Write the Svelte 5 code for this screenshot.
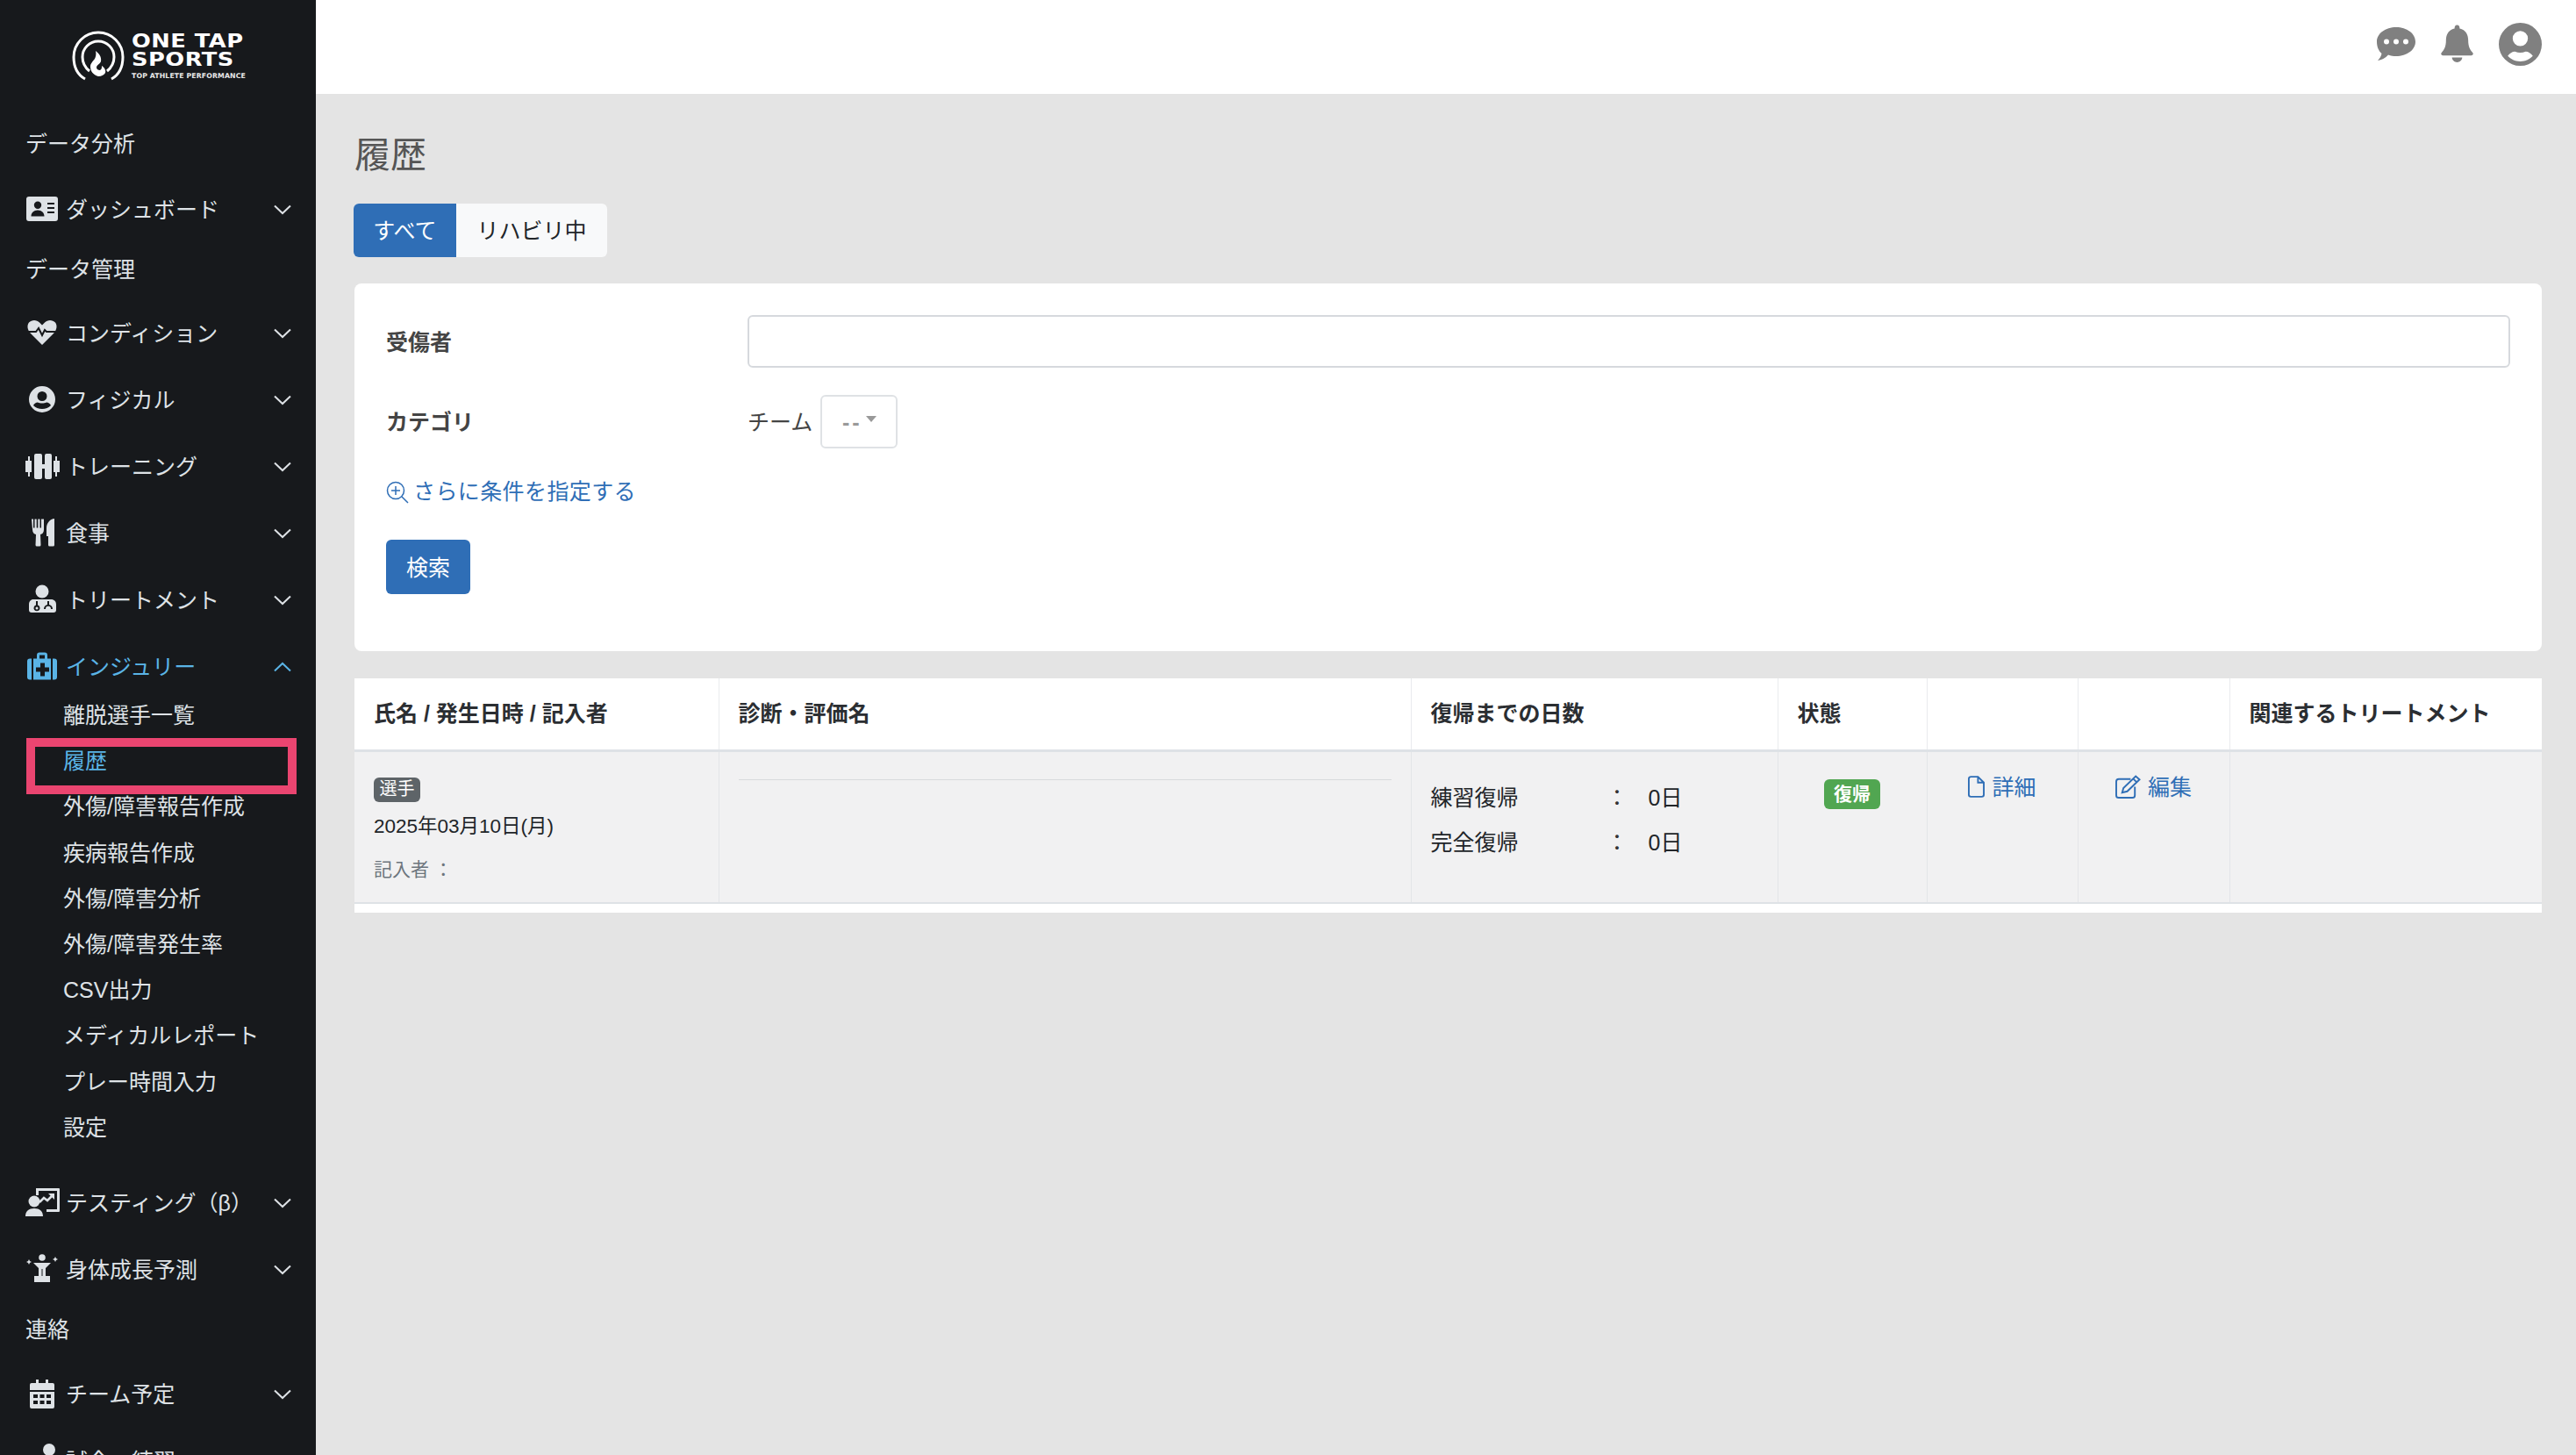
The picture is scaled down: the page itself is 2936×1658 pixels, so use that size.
<script>
  const topItems = [
    { type: "head", label: "データ分析" },
    { type: "group", label: "ダッシュボード", icon: "card", size: "wide" },
    { type: "head", label: "データ管理", tight: true },
    { type: "group", label: "コンディション", icon: "heart" },
    { type: "group", label: "フィジカル", icon: "person" },
    { type: "group", label: "トレーニング", icon: "dumbbell" },
    { type: "group", label: "食事", icon: "food" },
    { type: "group", label: "トリートメント", icon: "doctor" }
  ];

  const subItems = [
    "離脱選手一覧",
    "履歴",
    "外傷/障害報告作成",
    "疾病報告作成",
    "外傷/障害分析",
    "外傷/障害発生率",
    "CSV出力",
    "メディカルレポート",
    "プレー時間入力",
    "設定"
  ];

  const bottomItems = [
    { type: "group", label: "テスティング（β）", icon: "chart" },
    { type: "group", label: "身体成長予測", icon: "grow" },
    { type: "head", label: "連絡", tight: true },
    { type: "group", label: "チーム予定", icon: "calendar" },
    { type: "group", label: "試合・練習", icon: "person2" }
  ];
</script>

{#snippet icon(name)}
  <svg class="ico" viewBox="0 0 36 36" aria-hidden="true">
    {#if name == "card"}
      <path fill-rule="evenodd" d="M3 4h30a3 3 0 0 1 3 3v22a3 3 0 0 1-3 3H3a3 3 0 0 1-3-3V7a3 3 0 0 1 3-3zM13 9.500a4.200 4.200 0 1 0 0 8.400 4.200 4.200 0 0 0 0-8.400zM5.500 26.500h15c0-4-3-7-7.500-7s-7.500 3-7.500 7zM24 11v2h8v-2zM24 16v2h8v-2zM24 21v2h8v-2z" />
    {:else if name == "heart"}
      <path d="M18 32 5 19C1 15 .5 9.500 3 6.500c3-3.500 9-3.500 12 0l3 3 3-3c3-3.500 9-3.500 12 0 2.500 3 2 8.500-2 12.500z" />
      <path d="M2 17h9l3-4 4 8 3-6 2 2h11" fill="none" stroke="#17191c" stroke-width="2" />
    {:else if name == "person"}
      <path fill-rule="evenodd" d="M18 3a15 15 0 1 0 0 30 15 15 0 0 0 0-30zM18 9a5.500 5.500 0 1 1 0 11 5.500 5.500 0 0 1 0-11zM18 29c-4 0-7.500-1.500-10-4 1-2 3-3.500 5-3.500 1.500.6 3 1 5 1s3.500-.4 5-1c2 0 4 1.500 5 3.500-2.500 2.500-6 4-10 4z" />
    {:else if name == "dumbbell"}
      <path d="M2 7h2v5h2v13H4v5H2v-5H-1V12h3zM9 6a2 2 0 0 1 2-2h5a2 2 0 0 1 2 2v10h3V6a2 2 0 0 1 2-2h4a2 2 0 0 1 2 2v25a2 2 0 0 1-2 2h-4a2 2 0 0 1-2-2V21h-3v10a2 2 0 0 1-2 2h-5a2 2 0 0 1-2-2zM33 7h2v5h3v13h-3v5h-2v-5h-2V12h2z" />
    {:else if name == "food"}
      <path d="M6 2.500h2v10h1.500v-10h2.200v10h1.600v-10h2.200v10h1.500v-10H20v12c0 3.500-2 5-4 5.500l.5 12a1.500 1.500 0 0 1-1.500 1.500h-3a1.500 1.500 0 0 1-1.500-1.500l.5-12c-2-.5-4-2-4-5.500zM32 2v30a1.500 1.500 0 0 1-1.500 1.500h-4A1.500 1.500 0 0 1 25 32v-10h-2V13c0-6 4-10.500 9-11z" />
    {:else if name == "doctor"}
      <circle cx="18" cy="9" r="7.500" />
      <path fill-rule="evenodd" d="M8 18h20c4 0 6 2.500 6 6v6a3 3 0 0 1-3 3H6a3 3 0 0 1-3-3v-6c0-3.500 2-6 5-6zM11 20v4.500a3.500 3.500 0 1 0 2 0V20zM12 26.500a1.500 1.500 0 1 1 0 3 1.500 1.500 0 0 1 0-3zM24 20v4c-2.500.5-4 2.500-4 5h2c0-2 1-3.200 3-3.200s3 1.200 3 3.200h2c0-2.500-1.500-4.500-4-5v-4z" />
    {:else if name == "kit"}
      <path fill-rule="evenodd" d="M12 9V5a3 3 0 0 1 3-3h6a3 3 0 0 1 3 3v4h4v24H8V9zM15 5v4h6V5zM16 14v5h-5v5h5v5h5v-5h5v-5h-5v-5z" transform="translate(0 .5)" />
      <path d="M6 9v24H4c-2 0-3-1-3-3V12c0-2 1-3 3-3zM30 9h2c2 0 3 1 3 3v18c0 2-1 3-3 3h-2z" transform="translate(0 .5)" />
    {:else if name == "chart"}
      <circle cx="9" cy="17" r="6.500" />
      <path d="M-1 34c0-6 4-9 10-9s10 3 10 9zM11 2h26a1 1 0 0 1 1 1v25a1 1 0 0 1-1 1H23v-3h12V5H14v5h-3z" />
      <path d="m15 18 5-5 4 3 6-6" fill="none" stroke="currentColor" stroke-width="2.500" />
      <path d="M25 8h7v7z" />
    {:else if name == "grow"}
      <circle cx="18" cy="5" r="3.800" />
      <path d="M8 11h20l-6 6v9h5v7H9v-7h5v-9z" />
      <path d="m3 7 1 2 2 1-2 1-1 2-1-2-2-1 2-1zM33 4l1 2 2 1-2 1-1 2-1-2-2-1 2-1z" />
      <path d="M17.500 18h1v8h-1z" fill="#17191c" />
    {:else if name == "calendar"}
      <path fill-rule="evenodd" d="M6 6h5V2h3v4h8V2h3v4h5a2 2 0 0 1 2 2v6H4V8a2 2 0 0 1 2-2zM4 16h28v17a2 2 0 0 1-2 2H6a2 2 0 0 1-2-2zM8 19v4h5v-4zM15.500 19v4h5v-4zM23 19v4h5v-4zM8 26v4h5v-4zM15.500 26v4h5v-4zM23 26v4h5v-4z" />
    {:else if name == "person2"}
      <circle cx="26" cy="6" r="7" />
      <path d="M12 33c0-8 6-12 14-12s10 4 10 12z" />
    {/if}
  </svg>
{/snippet}

{#snippet chevron(up)}
  <svg class="chev" viewBox="0 0 20 12" aria-hidden="true">
    <path d={up ? "M1 10.500 10 2l9 8.500" : "M1 1.500 10 10l9-8.500"} fill="none" stroke="currentColor" stroke-width="2" />
  </svg>
{/snippet}

{#snippet navRows(list)}
  {#each list as item}
    {#if item.type == "head"}
      <div class="nav-head" class:tight={item.tight}>{item.label}</div>
    {:else}
      <div class="nav-group" class:wide={item.size}>
        <span class="ico-wrap">{@render icon(item.icon)}</span>
        <span class="nav-label">{item.label}</span>
        {@render chevron(false)}
      </div>
    {/if}
  {/each}
{/snippet}

<div class="page" lang="ja">
  <aside class="sidebar">
    <div class="logo">
      <svg class="logo-mark" viewBox="0 0 60 58" aria-hidden="true">
        <path d="M15 55C6 50 2 41 2 30a28 28 0 0 1 56 0c0 11-4 20-13 25" fill="none" stroke="#fff" stroke-width="3" />
        <path d="M20 46c-5-4-8-9-8-16a18 18 0 0 1 36 0c0 7-3 12-8 16" fill="none" stroke="#fff" stroke-width="3" />
        <path d="M30 52c-6-2-9-6-9-11 0-4 3-6 5-9 1-2 2-5 1-9 4 3 7 7 6 12-1 3-5 4-5 7 0 2 2 3 4 3 2-1 2-3 2-5 3 2 5 5 4 8-1 2-4 4-8 4z" fill="#fff" />
      </svg>
      <div class="logo-text">
        <div class="logo-big">ONE TAP</div>
        <div class="logo-big">SPORTS</div>
        <div class="logo-small">TOP ATHLETE PERFORMANCE</div>
      </div>
    </div>

    {@render navRows(topItems)}

    <div class="nav-group active">
      <span class="ico-wrap">{@render icon("kit")}</span>
      <span class="nav-label">インジュリー</span>
      {@render chevron(true)}
    </div>
    <div class="sub-list">
      {#each subItems as sub}
        <div class="nav-sub" class:current={sub == "履歴"}>{sub}</div>
      {/each}
      <div class="marker"></div>
    </div>

    {@render navRows(bottomItems)}
  </aside>

  <div class="main">
    <header class="topbar">
      <svg class="top-ico chat" viewBox="0 0 44 38" aria-hidden="true">
        <path fill-rule="evenodd" d="M22 0c12 0 22 7 22 16.500S34 33 22 33c-3 0-6-.4-9-1.500C10 35 5 37.500 1 38c2-2 4-5 4.500-8C2 27 0 22 0 16.500 0 7 10 0 22 0zM11 13.500a3 3 0 1 0 0 6 3 3 0 0 0 0-6zM22 13.500a3 3 0 1 0 0 6 3 3 0 0 0 0-6zM33 13.500a3 3 0 1 0 0 6 3 3 0 0 0 0-6z" />
      </svg>
      <svg class="top-ico bell" viewBox="0 0 38 44" aria-hidden="true">
        <path d="M19 0c2 0 3 1.500 3 4 7 1.500 10 7 10 14 0 7 2 11 5 14 1.500 1.500.6 3.500-1.500 3.500h-33C.4 35.500-.5 33.500 1 32c3-3 5-7 5-14 0-7 3-12.500 10-14 0-2.500 1-4 3-4zM13 38h12c0 3-3 5.500-6 5.500S13 41 13 38z" />
      </svg>
      <svg class="top-ico user" viewBox="0 0 48 48" aria-hidden="true">
        <path fill-rule="evenodd" d="M24 0a24 24 0 1 0 0 48 24 24 0 0 0 0-48zM24 9a8.500 8.500 0 1 1 0 17 8.500 8.500 0 0 1 0-17zM24 43c-6 0-10.500-2.500-14-6 2-3 5-5 8-5 2 .8 4 1.200 6 1.200s4-.4 6-1.200c3 0 6 2 8 5-3.500 3.500-8 6-14 6z" />
      </svg>
    </header>

    <main class="content">
      <h1>履歴</h1>

      <div class="tabs">
        <div class="tab on">すべて</div>
        <div class="tab">リハビリ中</div>
      </div>

      <section class="card">
        <div class="form-row first">
          <div class="form-label">受傷者</div>
          <input class="text-input" type="text" />
        </div>
        <div class="form-row second">
          <div class="form-label">カテゴリ</div>
          <span class="team">チーム</span>
          <div class="select"><span class="dashes">--</span><span class="caret"></span></div>
        </div>
        <a class="more">
          <svg class="more-ico" viewBox="0 0 26 26" aria-hidden="true">
            <circle cx="11" cy="11" r="9.500" fill="none" stroke="currentColor" stroke-width="1.500" />
            <path d="M11 6v10M6 11h10M18 18l7 7" fill="none" stroke="currentColor" stroke-width="1.500" />
          </svg>
          さらに条件を指定する
        </a>
        <button class="search">検索</button>
      </section>

      <section class="list">
        <table>
          <colgroup>
            <col style="width: 415px" />
            <col style="width: 789px" />
            <col style="width: 418px" />
            <col style="width: 170px" />
            <col style="width: 172px" />
            <col style="width: 173px" />
            <col />
          </colgroup>
          <thead>
            <tr>
              <th>氏名 / 発生日時 / 記入者</th>
              <th>診断・評価名</th>
              <th>復帰までの日数</th>
              <th>状態</th>
              <th></th>
              <th></th>
              <th>関連するトリートメント</th>
            </tr>
          </thead>
          <tbody>
            <tr>
              <td class="who">
                <span class="role">選手</span>
                <div class="date">2025年03月10日(月)</div>
                <div class="writer">記入者 ：</div>
              </td>
              <td class="diag"><div class="rule"></div></td>
              <td class="days">
                <div class="day-row"><span class="day-name">練習復帰</span><span class="day-colon">：</span><span>0日</span></div>
                <div class="day-row"><span class="day-name">完全復帰</span><span class="day-colon">：</span><span>0日</span></div>
              </td>
              <td class="state"><span class="ok">復帰</span></td>
              <td class="act">
                <a>
                  <svg class="doc" viewBox="0 0 20 26" aria-hidden="true">
                    <path d="M1 3.500A2.500 2.500 0 0 1 3.500 1H12l7 7v14.500a2.500 2.500 0 0 1-2.500 2.500h-13A2.500 2.500 0 0 1 1 22.500zM12 1v7h7" fill="none" stroke="currentColor" stroke-width="2" />
                  </svg>
                  詳細
                </a>
              </td>
              <td class="act">
                <a>
                  <svg class="edit" viewBox="0 0 30 28" aria-hidden="true">
                    <path d="M18 5H4a3 3 0 0 0-3 3v16a3 3 0 0 0 3 3h16a3 3 0 0 0 3-3V14" fill="none" stroke="currentColor" stroke-width="2" />
                    <path d="M8 21l1.500-5.500L24 1.500l4.500 4L14 19.500zM21 4.500l4.500 4.500" fill="none" stroke="currentColor" stroke-width="2" />
                  </svg>
                  編集
                </a>
              </td>
              <td></td>
            </tr>
          </tbody>
        </table>
      </section>
    </main>
  </div>
</div>

<style>
  :global(body) {
    margin: 0;
    background: #e4e4e4;
  }

  .page {
    display: flex;
    width: 2936px;
    height: 1658px;
    overflow: hidden;
    font-family: "Liberation Sans", "Noto Sans CJK JP", sans-serif;
    font-size: 25px;
    color: #212529;
  }

  /* sidebar */
  .sidebar {
    width: 360px;
    flex-shrink: 0;
    height: 1658px;
    overflow: hidden;
    background: #17191c;
    color: #dee2e6;
  }

  .logo {
    display: flex;
    align-items: center;
    gap: 8px;
    height: 128px;
    padding-left: 82px;
    box-sizing: border-box;
  }

  .logo-mark {
    width: 60px;
    height: 58px;
  }

  .logo-text {
    color: #fff;
    font-family: "DejaVu Sans", sans-serif;
    font-weight: 700;
  }

  .logo-big {
    font-size: 22px;
    line-height: 21px;
    letter-spacing: 0.4px;
    white-space: nowrap;
    transform: scaleX(1.17);
    transform-origin: left;
  }

  .logo-small {
    font-size: 7.800px;
    line-height: 11px;
    margin-top: 3px;
    letter-spacing: 0.1px;
    color: #e8e8e8;
    white-space: nowrap;
  }

  .nav-head {
    display: flex;
    align-items: center;
    height: 72px;
    padding-left: 29px;
    box-sizing: border-box;
    line-height: 1;
  }

  .nav-head.tight {
    height: 66px;
    padding-bottom: 2px;
  }

  .nav-group {
    display: flex;
    align-items: center;
    height: 76px;
    padding: 0 28px 0 30px;
  }

  .nav-group.wide {
    height: 75px;
  }

  .nav-group.active {
    color: #5ab4e6;
  }

  .ico-wrap {
    display: flex;
    width: 36px;
    height: 36px;
    margin-right: 9px;
    flex-shrink: 0;
  }

  .ico {
    width: 36px;
    height: 36px;
    fill: currentColor;
    overflow: visible;
  }

  .nav-label {
    flex: 1;
    padding-bottom: 2px;
  }

  .chev {
    width: 20px;
    height: 12px;
    margin-top: 2px;
  }

  .sub-list {
    position: relative;
    padding-bottom: 22px;
    margin-top: -9px;
  }

  .nav-sub {
    display: flex;
    align-items: center;
    height: 52.200px;
    padding-left: 72px;
    padding-bottom: 2px;
    box-sizing: border-box;
  }

  .nav-sub.current {
    color: #5ab4e6;
  }

  .marker {
    position: absolute;
    left: 30px;
    top: 53px;
    width: 308px;
    height: 64px;
    box-sizing: border-box;
    border: 10px solid #ea4570;
  }

  /* main */
  .main {
    flex: 1;
    min-width: 0;
    background: #e4e4e4;
  }

  .topbar {
    display: flex;
    justify-content: flex-end;
    align-items: center;
    height: 107px;
    background: #fff;
    padding: 0 39px 7px 0;
    box-sizing: border-box;
  }

  .top-ico {
    fill: #808080;
  }

  .chat {
    width: 44px;
    height: 38px;
    margin-right: 29px;
  }

  .bell {
    width: 37px;
    height: 44px;
    margin-right: 29px;
  }

  .user {
    width: 49px;
    height: 49px;
  }

  .content {
    padding: 47px 39px 0 44px;
  }

  h1 {
    margin: 0;
    font-size: 41px;
    font-weight: 400;
    line-height: 46px;
    color: #555;
  }

  .tabs {
    display: inline-flex;
    margin: 32px 0 0 -1px;
    border-radius: 6px;
    overflow: hidden;
    vertical-align: top;
    background: #f8f9fa;
  }

  .tab {
    display: flex;
    align-items: center;
    justify-content: center;
    width: 172px;
    height: 61px;
    padding-bottom: 3px;
    box-sizing: border-box;
    color: #212529;
  }

  .tab.on {
    width: 117px;
    background: #2f6eb6;
    color: #fff;
  }

  .card {
    margin-top: 30px;
    height: 419px;
    background: #fff;
    border-radius: 8px;
    padding: 36px 36px 0;
    box-sizing: border-box;
  }

  .form-row {
    display: flex;
    align-items: center;
  }

  .form-label {
    width: 412px;
    flex-shrink: 0;
    padding-bottom: 3px;
    font-weight: 700;
    color: #444;
  }

  .text-input {
    flex: 1;
    height: 60px;
    box-sizing: border-box;
    border: 2px solid #d6d9dd;
    border-radius: 6px;
    background: #fff;
  }

  .second {
    margin-top: 31px;
  }

  .team {
    color: #444;
    margin-right: 9px;
    padding-bottom: 3px;
  }

  .select {
    display: flex;
    align-items: center;
    justify-content: center;
    gap: 4px;
    width: 88px;
    height: 61px;
    box-sizing: border-box;
    border: 2px solid #dfe2e5;
    border-radius: 6px;
    color: #999;
  }

  .dashes {
    letter-spacing: 3px;
    font-weight: 700;
    margin-top: 2px;
  }

  .caret {
    width: 0;
    height: 0;
    margin-bottom: 6px;
    border-left: 6.500px solid transparent;
    border-right: 6.500px solid transparent;
    border-top: 7px solid #999;
  }

  .more {
    display: flex;
    align-items: center;
    gap: 5px;
    margin-top: 31px;
    height: 36px;
    color: #2f6eb6;
    line-height: 32px;
    letter-spacing: 0.4px;
  }

  .more-ico {
    width: 26px;
    height: 26px;
    margin-top: 2px;
  }

  .search {
    display: block;
    margin-top: 37px;
    width: 96px;
    height: 62px;
    border: 0;
    border-radius: 6px;
    background: #2f6eb6;
    color: #fff;
    font: inherit;
    padding: 0 0 3px;
  }

  .list {
    margin-top: 31px;
    background: #fff;
    padding-bottom: 10px;
  }

  table {
    width: 100%;
    table-layout: fixed;
    border-collapse: collapse;
  }

  th {
    height: 82px;
    padding: 0 22px 4px;
    box-sizing: border-box;
    text-align: left;
    font-weight: 700;
    color: #2b2e32;
    border-bottom: 3px solid #dee2e6;
    border-left: 1px solid #e9ebee;
    white-space: nowrap;
  }

  th:first-child,
  td:first-child {
    border-left: 0;
  }

  td {
    height: 174px;
    box-sizing: border-box;
    padding: 0 22px;
    vertical-align: top;
    background: #f1f1f2;
    border-left: 1px solid #e3e5e8;
    border-bottom: 2px solid #dee2e6;
  }

  .who {
    padding-top: 29px;
  }

  .role {
    display: block;
    width: 53px;
    height: 28px;
    line-height: 27px;
    text-align: center;
    font-size: 20px;
    color: #fff;
    background: #5e6468;
    border-radius: 6px;
  }

  .date {
    margin-top: 12px;
    font-size: 22.500px;
    line-height: 32px;
  }

  .writer {
    margin-top: 18px;
    font-size: 21px;
    line-height: 30px;
    color: #6c757d;
  }

  .diag {
    padding-top: 31px;
  }

  .rule {
    height: 1px;
    background: #d8dadc;
  }

  .days {
    padding-top: 32px;
  }

  .day-row {
    display: flex;
    height: 51px;
    line-height: 40px;
  }

  .day-name {
    width: 200px;
  }

  .day-colon {
    width: 48px;
    color: #333;
  }

  .state {
    text-align: center;
    padding: 31px 0 0;
  }

  .ok {
    display: inline-block;
    width: 64px;
    height: 34px;
    line-height: 33px;
    border-radius: 6px;
    font-size: 21px;
    font-weight: 700;
    color: #fff;
    background: #51a651;
  }

  .act {
    padding: 24px 0 0;
    text-align: center;
  }

  .act a {
    display: inline-flex;
    align-items: center;
    gap: 8px;
    color: #2f6eb6;
    line-height: 32px;
  }

  .doc {
    width: 19px;
    height: 25px;
  }

  .edit {
    width: 29px;
    height: 27px;
  }
</style>
